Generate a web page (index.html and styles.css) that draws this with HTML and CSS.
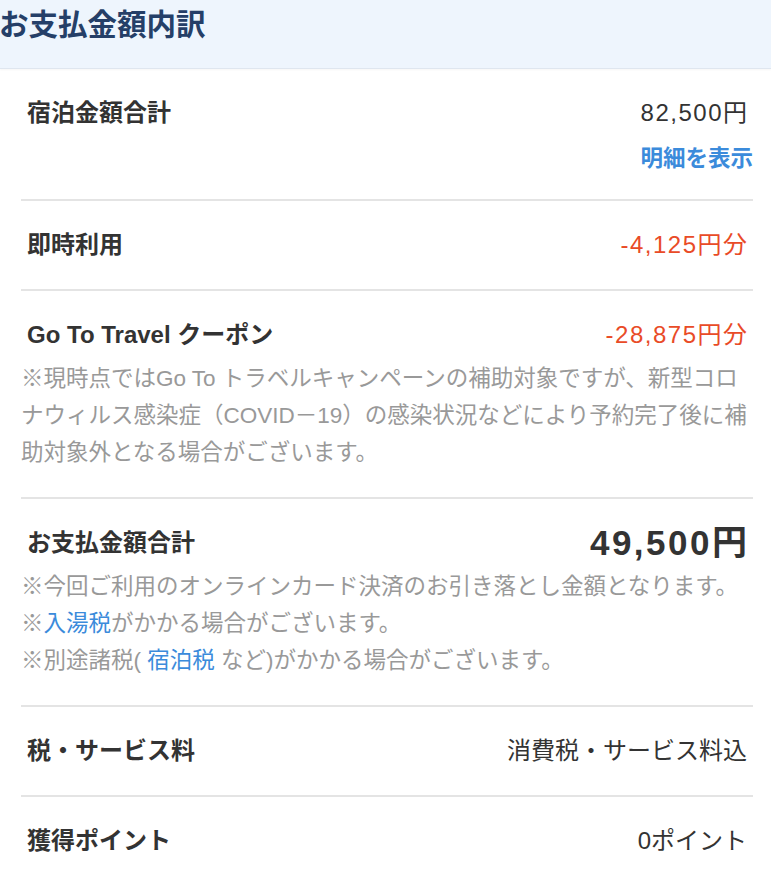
FILE: index.html
```html
<!DOCTYPE html>
<html lang="ja">
<head>
<meta charset="utf-8">
<title>お支払金額内訳</title>
<link rel="stylesheet" href="styles.css">
</head>
<body>
<header class="page-head">
  <h1 class="page-title">お支払金額内訳</h1>
</header>
<section class="breakdown">
  <div class="row">
    <div class="row-head">
      <span class="label">宿泊金額合計</span>
      <span class="value num">82,500円</span>
    </div>
    <div class="detail-link"><a href="#">明細を表示</a></div>
  </div>
  <div class="row">
    <div class="row-head">
      <span class="label">即時利用</span>
      <span class="value num discount">-4,125円分</span>
    </div>
  </div>
  <div class="row">
    <div class="row-head">
      <span class="label">Go To Travel クーポン</span>
      <span class="value num discount">-28,875円分</span>
    </div>
    <p class="note">※現時点ではGo To トラベルキャンペーンの補助対象ですが、新型コロ<br>ナウィルス感染症（COVID－19）の感染状況などにより予約完了後に補<br>助対象外となる場合がございます。</p>
  </div>
  <div class="row">
    <div class="row-head">
      <span class="label">お支払金額合計</span>
      <span class="value total">49,500円</span>
    </div>
    <p class="note">※今回ご利用のオンラインカード決済のお引き落とし金額となります。<br>※<a href="#">入湯税</a>がかかる場合がございます。<br>※別途諸税( <a href="#">宿泊税</a> など)がかかる場合がございます。</p>
  </div>
  <div class="row">
    <div class="row-head">
      <span class="label">税・サービス料</span>
      <span class="value">消費税・サービス料込</span>
    </div>
  </div>
  <div class="row row-last">
    <div class="row-head">
      <span class="label">獲得ポイント</span>
      <span class="value">0ポイント</span>
    </div>
  </div>
</section>
</body>
</html>
```

FILE: styles.css
```css
html, body {
  margin: 0;
  padding: 0;
  background: #ffffff;
}

body {
  font-family: "Liberation Sans", "Noto Sans CJK JP", sans-serif;
  color: #333333;
  width: 771px;
  overflow: hidden;
}

.page-head {
  background: #eef5fd;
  border-bottom: 1px solid #dfe6ef;
  box-shadow: 0 1px 2px rgba(0, 0, 0, 0.04);
  padding: 5px 0 23px;
}

.page-title {
  margin: 0 0 0 -1px;
  font-size: 29.5px;
  line-height: 40px;
  font-weight: 700;
  color: #253f68;
}

.breakdown {
  margin: 0 18px 0 21px;
}

.row {
  border-bottom: 2px solid #e4e4e4;
  padding: 26px 0 26px;
}

.row-last {
  border-bottom: none;
}

.row-head {
  display: flex;
  justify-content: space-between;
  align-items: center;
  padding: 0 6px;
  height: 36px;
}

.label {
  font-size: 24px;
  font-weight: 700;
  line-height: 36px;
  color: #333333;
}

.value {
  font-size: 24px;
  line-height: 36px;
  color: #333333;
}

.num {
  letter-spacing: 1.5px;
  margin-right: -1.5px;
}

.discount {
  color: #e94b27;
}

.total {
  font-size: 35px;
  font-weight: 700;
  letter-spacing: 2.5px;
  margin-right: -2.5px;
}

.detail-link {
  text-align: right;
  margin: 13px 0 -3px;
  line-height: 30px;
}

.detail-link a {
  font-size: 22.5px;
  font-weight: 700;
  color: #3b8bdb;
  text-decoration: none;
}

.note {
  margin: 7px 0 0;
  font-size: 22.5px;
  line-height: 37px;
  color: #999999;
  white-space: nowrap;
}

.note a {
  color: #3b8bdb;
  text-decoration: none;
}
```
